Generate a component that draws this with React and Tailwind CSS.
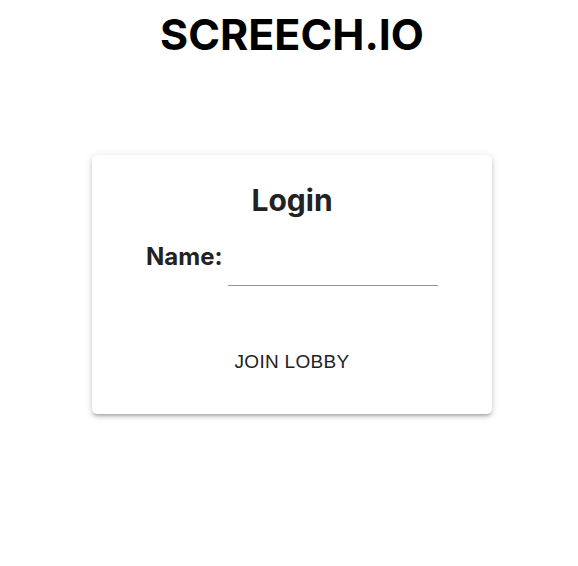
import React, { useState } from 'react';

const App = () => {
    const [name, setName] = useState('');

    return (
        <div className="min-h-[566px] bg-white flex flex-col items-center pl-[6px] font-['Inter',sans-serif] text-[#222]">
            <h1 className="mt-[11px] text-[43px] leading-[46px] font-bold text-black">
                SCREECH.IO
            </h1>

            <div className="mt-[98px] w-[400px] h-[259px] bg-white rounded-[5px] shadow-[0_3px_3px_-2px_rgba(0,0,0,0.2),0_3px_4px_0_rgba(0,0,0,0.14),0_1px_8px_0_rgba(0,0,0,0.12)] flex flex-col items-center">
                <h2 className="mt-[26px] text-[30px] leading-[38px] font-bold">Login</h2>

                <div className="mt-[22px] flex items-start w-full pl-[54px]">
                    <label className="text-[24px] leading-[32px] font-bold">Name:</label>
                    <input
                        type="text"
                        value={name}
                        onChange={(e) => setName(e.target.value)}
                        className="ml-[6px] mt-[6px] w-[210px] h-[39px] border-b border-[#949494] outline-none bg-transparent text-[16px]"
                    />
                </div>

                <button className="mt-[56px] px-4 py-2 text-[19px] leading-[24px] font-['Liberation_Sans',sans-serif] tracking-[0.3px] uppercase text-[#222]">
                    Join Lobby
                </button>
            </div>
        </div>
    );
};

export default App;
